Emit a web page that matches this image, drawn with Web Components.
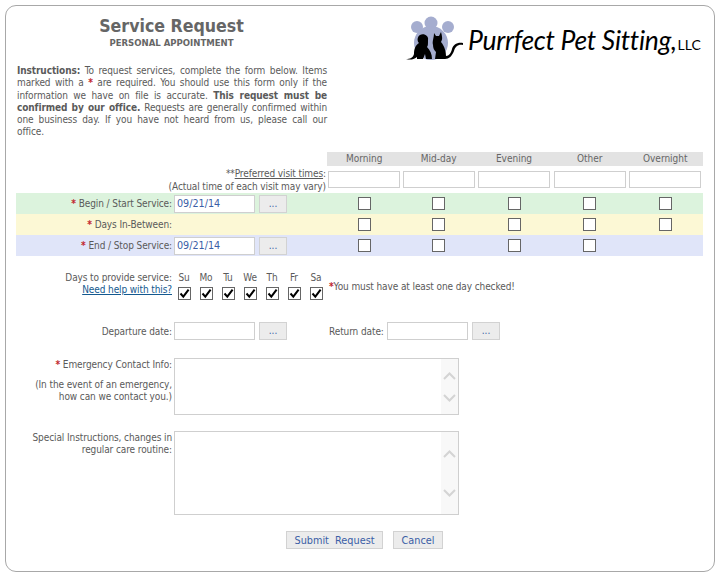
<!DOCTYPE html>
<html>
<head>
<meta charset="utf-8">
<title>Service Request</title>
<style>
  html, body { margin: 0; background: #fff; }
  body { font: 10px "DejaVu Sans Condensed", "DejaVu Sans", sans-serif; letter-spacing: -.1px; color: #5a5a5a; }
</style>
</head>
<body>
<request-panel>
  <request-header></request-header>
  <visit-schedule></visit-schedule>
  <days-picker></days-picker>
  <away-dates></away-dates>
  <note-field top="18" area-height="55" scroll-up="17" scroll-down="39">
    <div class="first"><span style="color:#c0272d;font-weight:bold">*</span> Emergency Contact Info:</div>
    <div style="margin-top:8px">(In the event of an emergency,</div>
    <div>how can we contact you.)</div>
  </note-field>
  <note-field top="16" area-height="82" scroll-up="22" scroll-down="61">
    <div>Special Instructions, changes in</div>
    <div>regular care routine:</div>
  </note-field>
  <form-actions></form-actions>
</request-panel>

<script>
const BLUE = '#3b5ea6';
const RED = '#c0272d';

class RequestPanel extends HTMLElement {
  constructor() {
    super();
    this.attachShadow({ mode: 'open' });
    this.shadowRoot.innerHTML = `
      <style>
        :host {
          display: block;
          box-sizing: border-box;
          width: 710px;
          height: 567px;
          margin: 5px 0 0 5px;
          padding: 10px 10px 0 10px;
          border: 1px solid #a8a8a8;
          border-radius: 11px;
        }
      </style>
      <slot></slot>`;
  }
}
customElements.define('request-panel', RequestPanel);

class RequestHeader extends HTMLElement {
  constructor() {
    super();
    this.attachShadow({ mode: 'open' });
    this.shadowRoot.innerHTML = `
      <style>
        :host { display: flex; height: 136px; }
        .left { width: 311px; }
        h1 {
          margin: 0; text-align: center; color: #666; letter-spacing: 0;
          font: bold 17.6px/20px "DejaVu Sans Condensed", sans-serif;
        }
        h2 {
          margin: 1px 0 0; text-align: center; color: #666; letter-spacing: 0;
          font: bold 9.5px/12px "DejaVu Sans Condensed", sans-serif;
        }
        .copy { margin: 16px 0 0 1px; line-height: 12.25px; }
        /* each line is its own box so the breaks stay where the form has them */
        .copy div { text-align: justify; text-align-last: justify; white-space: nowrap; }
        .copy div:last-child { text-align-last: left; }
        .req { color: ${RED}; font-weight: bold; }
        .logo { display: flex; align-items: flex-start; margin-left: 77px; margin-top: -2px; }
        .logo svg { flex: none; }
        .name {
          margin: 8px 0 0 0; color: #000; white-space: nowrap; letter-spacing: -.3px;
          font: italic 400 26.5px/36px Lato, sans-serif;
        }
        .name small { font: 400 14px Lato, sans-serif; letter-spacing: 0; margin-left: 1px; }
      </style>
      <div class="left">
        <h1>Service Request</h1>
        <h2>PERSONAL APPOINTMENT</h2>
        <div class="copy">
          <div><b>Instructions:</b> To request services, complete the form below. Items</div>
          <div>marked with a <span class="req">*</span> are required. You should use this form only if the</div>
          <div>information we have on file is accurate. <b>This request must be</b></div>
          <div><b>confirmed by our office.</b> Requests are generally confirmed within</div>
          <div>one business day. If you have not heard from us, please call our</div>
          <div>office.</div>
        </div>
      </div>
      <div class="logo">
        <svg width="64" height="50" viewBox="0 0 64 50">
          <circle cx="27" cy="9" r="6.5" fill="#a5adcf"/>
          <circle cx="13" cy="13" r="6" fill="#a5adcf"/>
          <circle cx="44" cy="13" r="6" fill="#a5adcf"/>
          <circle cx="27" cy="29" r="17" fill="#a5adcf"/>
          <path fill="#000" d="M2 45 C6 45 9 44 10 40 C10 34 12 31 15 29 C13 27 13 23 16 21 C20 19 25 22 24 26 C24 30 24 32 23 33 C26 36 28 40 28 45 L22 45 L21 40 L19 45 L13 45 L13 43 C9 46 6 46 2 45 Z"/>
          <path fill="#000" d="M29 31 C28 27 30 24 30 19 L32 22 L35 22 L37 18 C38 22 39 25 37 28 C41 33 42 38 42 42 C45 42 47 39 48 35 C49 31 53 28 59 29 L59 31 C54 30 51 33 50 37 C48 42 45 45 41 45 L31 45 L32 38 C30 36 29 34 29 31 Z"/>
        </svg>
        <div class="name">Purrfect Pet Sitting,<small>LLC</small></div>
      </div>`;
  }
}
customElements.define('request-header', RequestHeader);

class TickBox extends HTMLElement {
  constructor() {
    super();
    this.attachShadow({ mode: 'open' });
    const mark = this.hasAttribute('checked')
      ? '<svg width="11" height="11" viewBox="0 0 11 11"><path d="M1.5 5.5 L4.3 8.6 L9.6 1.6" fill="none" stroke="#000" stroke-width="2"/></svg>'
      : '';
    this.shadowRoot.innerHTML = `
      <style>
        :host {
          display: block; box-sizing: border-box; width: 13px; height: 13px;
          border: 1px solid #666; background: #fff;
        }
        svg { display: block; }
      </style>${mark}`;
  }
}
customElements.define('tick-box', TickBox);

class DateField extends HTMLElement {
  constructor() {
    super();
    this.attachShadow({ mode: 'open' });
    const value = this.getAttribute('value') || '';
    this.shadowRoot.innerHTML = `
      <style>
        :host { display: flex; align-items: center; gap: 4px; }
        input {
          box-sizing: border-box; width: 81px; height: 18px; margin: 0; padding: 0 2px;
          border: 1px solid #cfcfcf; background: #fff; color: ${BLUE};
          font: 10.7px "DejaVu Sans Condensed", sans-serif;
        }
        button {
          box-sizing: border-box; width: 28px; height: 18px; margin: 0; padding: 0 0 1px;
          border: 1px solid #d2d2d2; background: #ececec; color: ${BLUE};
          font: 10px "DejaVu Sans Condensed", sans-serif;
        }
      </style>
      <input type="text" value="${value}"><button>...</button>`;
  }
}
customElements.define('date-field', DateField);

class VisitSchedule extends HTMLElement {
  constructor() {
    super();
    this.attachShadow({ mode: 'open' });
    const cols = '156px 155px 74.5px 74.5px 76px 75.5px 75.5px';
    const row = (cls, label, date, n) => {
      const boxes = [0, 1, 2, 3, 4].map(i =>
        `<div class="c">${i < n ? '<tick-box></tick-box>' : ''}</div>`).join('');
      const field = date ? `<date-field value="${date}"></date-field>` : '';
      return `<div class="row ${cls}"><div class="lab"><span class="req">*</span> ${label}</div><div class="d">${field}</div>${boxes}</div>`;
    };
    const names = ['Morning', 'Mid-day', 'Evening', 'Other', 'Overnight'];
    this.shadowRoot.innerHTML = `
      <style>
        :host { display: block; width: 687px; }
        .g { display: grid; grid-template-columns: ${cols}; }
        .heads { height: 14px; }
        .heads .sp { grid-column: span 2; }
        .heads .h { background: #e3e3e3; text-align: center; line-height: 14px; color: #666; letter-spacing: 0; }
        .times { height: 27px; }
        .times .note { grid-column: span 2; text-align: right; line-height: 12.5px; padding: 2px 1px 0 0; }
        .times .note u { text-underline-offset: 1px; }
        .times .t { display: flex; justify-content: center; padding-top: 5px; }
        .times input {
          box-sizing: border-box; width: 72px; height: 17px; margin: 0;
          border: 1px solid #cfcfcf; background: #fff;
        }
        .row { height: 21px; align-items: center; }
        .green { background: #dcf3dd; }
        .yellow { background: #fcf8d5; }
        .blue { background: #e0e5f9; }
        .lab { text-align: right; }
        .req { color: ${RED}; font-weight: bold; }
        .d { padding-left: 2px; }
        .c { display: flex; justify-content: center; }
      </style>
      <div class="g heads"><div class="sp"></div>${names.map(n => `<div class="h">${n}</div>`).join('')}</div>
      <div class="g times">
        <div class="note">**<u>Preferred visit times</u>:<br>(Actual time of each visit may vary)</div>
        ${names.map(() => '<div class="t"><input type="text"></div>').join('')}
      </div>
      ${row('g green', 'Begin / Start Service:', '09/21/14', 5)}
      ${row('g yellow', 'Days In-Between:', '', 5)}
      ${row('g blue', 'End / Stop Service:', '09/21/14', 4)}`;
  }
}
customElements.define('visit-schedule', VisitSchedule);

class DaysPicker extends HTMLElement {
  constructor() {
    super();
    this.attachShadow({ mode: 'open' });
    const days = ['Su', 'Mo', 'Tu', 'We', 'Th', 'Fr', 'Sa'];
    this.shadowRoot.innerHTML = `
      <style>
        :host { display: flex; margin-top: 16px; }
        .lab { width: 156px; text-align: right; line-height: 12px; }
        .lab a { display: block; color: #14598f; text-decoration: underline; font-weight: 500; }
        .days { display: grid; grid-template-columns: repeat(7, 22px); margin-left: 1px; justify-items: center; line-height: 12px; row-gap: 3px; }
        .msg { margin: 9px 0 0 2px; line-height: 12px; }
        .msg span { color: ${RED}; font-weight: bold; }
      </style>
      <div class="lab">Days to provide service:<a href="#">Need help with this?</a></div>
      <div class="days">
        ${days.map(d => `<div>${d}</div>`).join('')}
        ${days.map(() => '<tick-box checked></tick-box>').join('')}
      </div>
      <div class="msg"><span>*</span>You must have at least one day checked!</div>`;
  }
}
customElements.define('days-picker', DaysPicker);

class AwayDates extends HTMLElement {
  constructor() {
    super();
    this.attachShadow({ mode: 'open' });
    this.shadowRoot.innerHTML = `
      <style>
        :host { display: flex; align-items: center; margin-top: 22px; white-space: nowrap; }
        .lab { width: 156px; text-align: right; }
        date-field { margin-left: 2px; }
        .ret { margin-left: 42px; width: 58px; }
        .d2 { margin-left: 0; }
      </style>
      <div class="lab">Departure date:</div><date-field></date-field>
      <div class="ret">Return date:</div><date-field class="d2"></date-field>`;
  }
}
customElements.define('away-dates', AwayDates);

class NoteField extends HTMLElement {
  constructor() {
    super();
    this.attachShadow({ mode: 'open' });
    const h = +this.getAttribute('area-height');
    const up = +this.getAttribute('scroll-up');
    const down = +this.getAttribute('scroll-down');
    const chev = (y, d) => `<svg style="top:${y}px" width="13" height="8" viewBox="0 0 13 8"><path d="${d}" fill="none" stroke="#d4d4d4" stroke-width="2"/></svg>`;
    this.shadowRoot.innerHTML = `
      <style>
        :host { display: flex; margin-top: ${this.getAttribute('top')}px; }
        .lab { width: 156px; text-align: right; line-height: 12px; padding-top: 1px; }
        .box {
          position: relative; box-sizing: border-box; width: 285px; height: ${h + 2}px;
          margin-left: 2px; border: 1px solid #cfcfcf; background: #fff;
        }
        textarea {
          display: block; box-sizing: border-box; width: 266px; height: 100%;
          margin: 0; padding: 2px; border: 0; outline: 0; resize: none;
        }
        .bar { position: absolute; top: 0; right: 0; bottom: 0; width: 17px; background: #f8f8f8; }
        .bar svg { position: absolute; left: 2px; }
      </style>
      <div class="lab"><slot></slot></div>
      <div class="box">
        <textarea></textarea>
        <div class="bar">
          ${chev(up - 4, 'M1 7 L6.5 1.5 L12 7')}
          ${chev(down - 4, 'M1 1 L6.5 6.5 L12 1')}
        </div>
      </div>`;
  }
}
customElements.define('note-field', NoteField);

class FormActions extends HTMLElement {
  constructor() {
    super();
    this.attachShadow({ mode: 'open' });
    this.shadowRoot.innerHTML = `
      <style>
        :host { display: flex; gap: 10px; margin: 16px 0 0 270px; }
        button {
          box-sizing: border-box; height: 18px; margin: 0; padding: 0;
          border: 1px solid #d2d2d2; background: #ececec; color: ${BLUE};
          font: 10.8px "DejaVu Sans Condensed", sans-serif; white-space: pre;
        }
        .s { width: 97px; }
        .c { width: 50px; }
      </style>
      <button class="s">Submit  Request</button><button class="c">Cancel</button>`;
  }
}
customElements.define('form-actions', FormActions);
</script>
</body>
</html>
